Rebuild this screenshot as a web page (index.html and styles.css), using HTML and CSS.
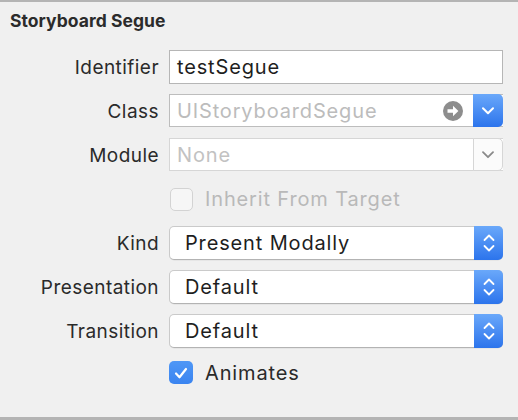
FILE: index.html
```html
<!DOCTYPE html>
<html>
<head>
<meta charset="utf-8">
<link rel="stylesheet" href="styles.css">
</head>
<body>
<div class="panel">
  <h1 class="title">Storyboard Segue</h1>
  <div class="form">
    <div class="label">Identifier</div>
    <div class="field text-field"><span class="value">testSegue</span></div>

    <div class="label">Class</div>
    <div class="field combo">
      <span class="value placeholder">UIStoryboardSegue</span>
      <svg class="go" width="20" height="20" viewBox="0 0 20 20"><circle cx="10" cy="10" r="10" fill="#8d8d8d"/><path d="M4.5 8.3h5.5V4.8l5.4 5.2-5.4 5.2v-3.5H4.5z" fill="#fff"/></svg>
      <span class="drop blue"><svg width="12" height="8" viewBox="0 0 12 8"><path d="M1 1.2l5 5 5-5" fill="none" stroke="#fff" stroke-width="2" stroke-linecap="round" stroke-linejoin="round"/></svg></span>
    </div>

    <div class="label">Module</div>
    <div class="field combo disabled">
      <span class="value placeholder">None</span>
      <span class="drop light"><svg width="12" height="8" viewBox="0 0 12 8"><path d="M1 1.2l5 5 5-5" fill="none" stroke="#8a8a8a" stroke-width="1.8" stroke-linecap="round" stroke-linejoin="round"/></svg></span>
    </div>

    <div class="spacer"></div>
    <div class="check-row">
      <span class="checkbox off"></span>
      <span class="check-label muted">Inherit From Target</span>
    </div>

    <div class="label">Kind</div>
    <div class="field popup">
      <span class="value">Present Modally</span>
      <span class="stepper"><svg width="12" height="20" viewBox="0 0 12 20"><path d="M1.5 7l4.5-4.5 4.5 4.5M1.5 13l4.5 4.5 4.5-4.5" fill="none" stroke="#fff" stroke-width="1.8" stroke-linecap="round" stroke-linejoin="round"/></svg></span>
    </div>

    <div class="label">Presentation</div>
    <div class="field popup">
      <span class="value">Default</span>
      <span class="stepper"><svg width="12" height="20" viewBox="0 0 12 20"><path d="M1.5 7l4.5-4.5 4.5 4.5M1.5 13l4.5 4.5 4.5-4.5" fill="none" stroke="#fff" stroke-width="1.8" stroke-linecap="round" stroke-linejoin="round"/></svg></span>
    </div>

    <div class="label">Transition</div>
    <div class="field popup">
      <span class="value">Default</span>
      <span class="stepper"><svg width="12" height="20" viewBox="0 0 12 20"><path d="M1.5 7l4.5-4.5 4.5 4.5M1.5 13l4.5 4.5 4.5-4.5" fill="none" stroke="#fff" stroke-width="1.8" stroke-linecap="round" stroke-linejoin="round"/></svg></span>
    </div>

    <div class="spacer"></div>
    <div class="check-row last">
      <span class="checkbox on"><svg width="16" height="14" viewBox="0 0 16 14"><path d="M3 7.5l3.5 3.8L13 3" fill="none" stroke="#fff" stroke-width="2.2" stroke-linecap="round" stroke-linejoin="round"/></svg></span>
      <span class="check-label">Animates</span>
    </div>
  </div>
</div>
</body>
</html>
```
FILE: styles.css
```css
html, body {
  margin: 0;
  padding: 0;
}
body {
  width: 518px;
  height: 420px;
  background: #f0f0f0;
  font-family: "Inter", "Liberation Sans", sans-serif;
  color: #262626;
  overflow: hidden;
}
.panel {
  box-sizing: border-box;
  height: 420px;
  border-top: 2px solid #b4b4b4;
  border-bottom: 3px solid #b4b4b4;
  padding: 0 15px 0 0;
}
.title {
  margin: 0;
  padding: 8px 0 0 10px;
  height: 48px;
  box-sizing: border-box;
  font-size: 17.5px;
  font-weight: 700;
  letter-spacing: 0.05px;
  color: #2b2b2b;
}
.form {
  display: grid;
  grid-template-columns: 159px 1fr;
  column-gap: 10px;
  row-gap: 10px;
  grid-auto-rows: 34px;
}
.label {
  display: flex;
  align-items: center;
  justify-content: flex-end;
  font-size: 19px;
  letter-spacing: 0.45px;
  color: #2a2a2a;
}
.field {
  box-sizing: border-box;
  display: flex;
  align-items: center;
  background: #fff;
  font-size: 20px;
  letter-spacing: 0.85px;
  position: relative;
}
.text-field {
  border: 1px solid #b6b6b6;
  padding-left: 7px;
  color: #1e1e1e;
}
.combo {
  border: 1px solid #bdbdbd;
  border-right: none;
  padding-left: 7px;
  height: 33px;
}
.combo .value {
  flex: 1;
}
.placeholder {
  color: #bcbcbc;
}
.go {
  margin-right: 10px;
}
.drop {
  align-self: stretch;
  width: 30px;
  margin: -1px 0;
  display: flex;
  align-items: center;
  justify-content: center;
  border-radius: 0 5px 5px 0;
}
.drop.blue {
  background: linear-gradient(#6aa8fa, #2c74ec);
}
.disabled {
  border-color: #d6d6d6;
}
.disabled .placeholder {
  color: #c2c2c2;
}
.drop.light {
  background: #fbfbfb;
  border: 1px solid #d6d6d6;
  box-sizing: border-box;
}
.spacer {
  min-height: 0;
}
.check-row {
  display: flex;
  align-items: center;
  gap: 12px;
  padding-left: 1px;
}
.check-row.last {
  align-items: flex-start;
  padding-top: 3px;
  padding-left: 0;
}
.checkbox {
  box-sizing: border-box;
  width: 23px;
  height: 23px;
  border-radius: 5px;
  display: flex;
  align-items: center;
  justify-content: center;
}
.checkbox.off {
  background: #f6f6f6;
  border: 1px solid #d3d3d3;
}
.checkbox.on {
  width: 24px;
  background: linear-gradient(#4f97f6, #3a84f0);
}
.check-label {
  font-size: 20px;
  letter-spacing: 0.85px;
  color: #2a2a2a;
}
.check-label.muted {
  color: #b9b9b9;
}
.popup {
  border: 1px solid #cacaca;
  border-bottom-color: #b3b3b3;
  border-radius: 5px;
  padding-left: 15px;
  box-shadow: 0 0.5px 0.5px rgba(0, 0, 0, 0.08);
  color: #1e1e1e;
}
.popup .value {
  flex: 1;
}
.stepper {
  align-self: stretch;
  width: 29px;
  margin: -1px -1px -1px 0;
  display: flex;
  align-items: center;
  justify-content: center;
  border-radius: 0 5px 5px 0;
  background: linear-gradient(#6aa8fa, #2c74ec);
}
```
